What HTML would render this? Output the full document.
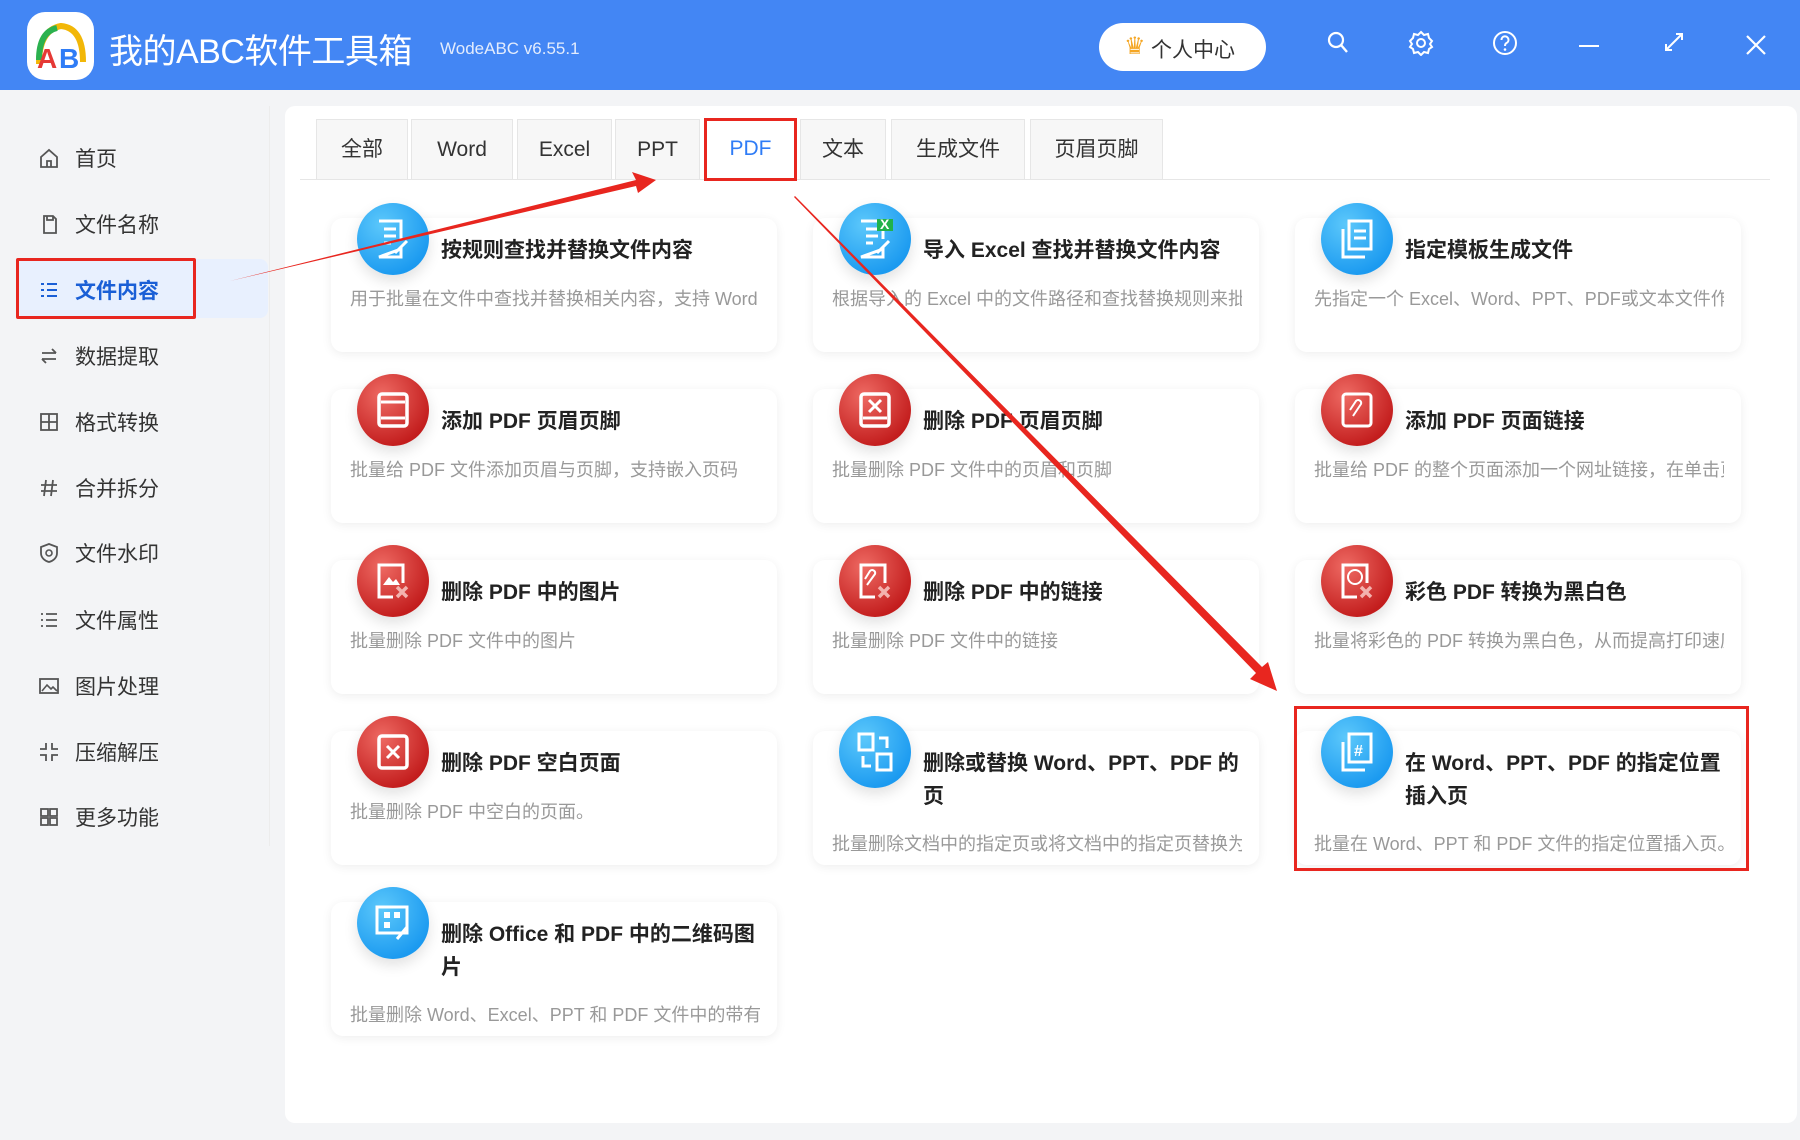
<!DOCTYPE html>
<html><head><meta charset="utf-8"><style>
*{margin:0;padding:0;box-sizing:border-box}
body{width:1800px;height:1140px;overflow:hidden;background:#f3f4f6;font-family:"Liberation Sans","Noto Sans CJK SC",sans-serif;position:relative}
.hdr{position:absolute;left:0;top:0;width:1800px;height:90px;background:#4386f4}
.logo{position:absolute;left:27px;top:12px;width:67px;height:68px;background:#fff;border-radius:18px}
.title{position:absolute;left:109px;top:24px;color:#fff;font-size:34px;letter-spacing:-0.5px}
.ver{position:absolute;left:440px;top:39px;color:#e3ecfd;font-size:17px}
.vip{position:absolute;left:1099px;top:23px;width:167px;height:48px;background:#fff;border-radius:24px;font-size:21px;color:#333;padding:11px 0 0 52px}
.hi{position:absolute;top:30px}
.side{position:absolute;left:0;top:90px;width:270px;height:1050px}
.si{position:absolute;left:0;width:270px;height:40px;font-size:21px;color:#333}
.si span{position:absolute;left:75px;top:6px}
.si svg{position:absolute;left:38px;top:10px}
.panel{position:absolute;left:285px;top:106px;width:1512px;height:1017px;background:#fff;border-radius:10px}
.tab{position:absolute;top:119px;height:60px;background:#f7f7f7;border:1px solid #e6e6e6;border-bottom:none;font-size:21px;color:#333;text-align:center;line-height:60px}
.card{position:absolute;width:446px;height:134px;background:#fff;border-radius:12px;box-shadow:0 2px 10px rgba(0,0,0,.07)}
.ic{position:absolute;left:26px;top:-15px;width:72px;height:72px;border-radius:50%;box-shadow:0 6px 14px rgba(0,0,0,.12)}
.b{background:radial-gradient(circle at 35% 30%,#5cc8fb,#1b9af0 75%)}
.r{background:radial-gradient(circle at 35% 30%,#ee6a63,#c31d1d 75%)}
.ic svg{position:absolute;left:18px;top:16px}
.ct{position:absolute;left:110px;top:16px;font-size:21px;font-weight:bold;color:#222;line-height:33px;width:320px}
.cd{position:absolute;left:19px;top:67px;width:410px;font-size:18px;color:#999;white-space:nowrap;overflow:hidden}
</style></head><body>
<div class="hdr">
<div class="logo"><svg width="67" height="68" viewBox="0 0 67 68"><path d="M12 52 Q12 18 34 14 Q56 16 56 50" fill="none" stroke="#f2b707" stroke-width="6"/><path d="M12 48 Q12 20 30 16" fill="none" stroke="#2bb14f" stroke-width="6"/><text x="10" y="56" font-size="28" font-weight="bold" fill="#e53935" font-family="Liberation Sans">A</text><text x="32" y="56" font-size="28" font-weight="bold" fill="#2f7cf6" font-family="Liberation Sans">B</text></svg></div>
<div class="title">我的ABC软件工具箱</div>
<div class="ver">WodeABC v6.55.1</div>
<div class="vip"><span style="position:absolute;left:25px;top:9px;font-size:24px;color:#f5a623">♛</span>个人中心</div>
<svg class="hi" style="left:1326px" width="24" height="26" viewBox="0 0 24 26"><circle cx="10" cy="10" r="7" fill="none" stroke="#fff" stroke-width="2.2"/><path d="M15 15l6 7" stroke="#fff" stroke-width="2.4"/></svg>
<svg class="hi" style="left:1408px" width="26" height="26" viewBox="0 0 26 26"><circle cx="13" cy="13" r="4" fill="none" stroke="#fff" stroke-width="2"/><path d="M13 2l3 3 4-1 1 4 3 3-2 3 2 3-3 2-1 4-4-1-3 3-3-3-4 1-1-4-3-2 2-3-2-3 3-3 1-4 4 1z" fill="none" stroke="#fff" stroke-width="2"/></svg>
<svg class="hi" style="left:1492px" width="26" height="26" viewBox="0 0 26 26"><circle cx="13" cy="13" r="11" fill="none" stroke="#fff" stroke-width="2"/><path d="M9.5 10a3.5 3.5 0 1 1 5 3c-1.2.6-1.5 1.300-1.5 3" fill="none" stroke="#fff" stroke-width="2"/><circle cx="13" cy="19.5" r="1.3" fill="#fff"/></svg>
<div class="hi" style="left:1579px;top:45px;width:20px;height:2px;background:#fff"></div>
<svg class="hi" style="left:1662px" width="24" height="24" viewBox="0 0 24 24"><path d="M4 20L20 4M14 4h6v6M4 14v6h6" fill="none" stroke="#fff" stroke-width="2"/></svg>
<svg class="hi" style="left:1745px;top:34px" width="22" height="22" viewBox="0 0 22 22"><path d="M2 2l18 18M20 2L2 20" stroke="#fff" stroke-width="2.2"/></svg>
</div>
<div style="position:absolute;left:269px;top:106px;width:1px;height:740px;background:#ececec"></div>
<div style="position:absolute;left:18px;top:259px;width:250px;height:59px;background:#e8f0fe;border-radius:8px"></div>
<div style="position:absolute;left:16px;top:258px;width:180px;height:61px;border:3px solid #e8261f;border-radius:2px"></div>
<div class="side">
<div class="si" style="top:47px"><svg width="22" height="22" viewBox="0 0 22 22"><path d="M3 10L11 3l8 7v10H3z M9 20v-6h4v6" fill="none" stroke="#555" stroke-width="1.8"/></svg><span>首页</span></div>
<div class="si" style="top:113px"><svg width="22" height="22" viewBox="0 0 22 22"><path d="M6 3h9l3 3v14H6z M9 3v4h6V3" fill="none" stroke="#555" stroke-width="1.8"/></svg><span>文件名称</span></div>
<div class="si" style="top:179px;color:#1a5fd6;font-weight:bold"><svg width="22" height="22" viewBox="0 0 22 22"><path d="M3 5h3M9 5h10M3 11h3M9 11h10M3 17h3M9 17h10" stroke="#1a5fd6" stroke-width="2"/></svg><span>文件内容</span></div>
<div class="si" style="top:245px"><svg width="22" height="22" viewBox="0 0 22 22"><path d="M4 8h14M14 4l4 4M4 14h14M4 14l4 4" fill="none" stroke="#555" stroke-width="1.8"/></svg><span>数据提取</span></div>
<div class="si" style="top:311px"><svg width="22" height="22" viewBox="0 0 22 22"><rect x="3" y="3" width="16" height="16" fill="none" stroke="#555" stroke-width="1.8"/><path d="M11 3v16M3 11h16" stroke="#555" stroke-width="1.8"/></svg><span>格式转换</span></div>
<div class="si" style="top:377px"><svg width="22" height="22" viewBox="0 0 22 22"><path d="M8 3L6 19M15 3l-2 16M3 8h16M3 14h16" stroke="#555" stroke-width="1.8"/></svg><span>合并拆分</span></div>
<div class="si" style="top:442px"><svg width="22" height="22" viewBox="0 0 22 22"><path d="M11 2l8 3v6c0 5-4 8-8 9-4-1-8-4-8-9V5z" fill="none" stroke="#555" stroke-width="1.8"/><circle cx="11" cy="11" r="3" fill="none" stroke="#555" stroke-width="1.6"/></svg><span>文件水印</span></div>
<div class="si" style="top:509px"><svg width="22" height="22" viewBox="0 0 22 22"><path d="M3 5h2M8 5h11M3 11h2M8 11h11M3 17h2M8 17h11" stroke="#555" stroke-width="1.8"/></svg><span>文件属性</span></div>
<div class="si" style="top:575px"><svg width="22" height="22" viewBox="0 0 22 22"><rect x="2" y="4" width="18" height="14" fill="none" stroke="#555" stroke-width="1.8"/><path d="M4 16l5-6 4 4 2-2 4 4" fill="none" stroke="#555" stroke-width="1.6"/></svg><span>图片处理</span></div>
<div class="si" style="top:641px"><svg width="22" height="22" viewBox="0 0 22 22"><path d="M8 2v6H2M14 2v6h6M8 20v-6H2M14 20v-6h6" fill="none" stroke="#555" stroke-width="1.8"/></svg><span>压缩解压</span></div>
<div class="si" style="top:706px"><svg width="22" height="22" viewBox="0 0 22 22"><rect x="3" y="3" width="7" height="7" fill="none" stroke="#555" stroke-width="1.8"/><rect x="12" y="3" width="7" height="7" fill="none" stroke="#555" stroke-width="1.8"/><rect x="3" y="12" width="7" height="7" fill="none" stroke="#555" stroke-width="1.8"/><rect x="12" y="12" width="7" height="7" fill="none" stroke="#555" stroke-width="1.8"/></svg><span>更多功能</span></div>
</div>
<div class="panel"></div>
<div style="position:absolute;left:300px;top:179px;width:1470px;height:1px;background:#e6e6e6"></div>
<div class="tab" style="left:316px;width:92px">全部</div>
<div class="tab" style="left:411px;width:102px">Word</div>
<div class="tab" style="left:517px;width:95px">Excel</div>
<div class="tab" style="left:615px;width:85px">PPT</div>
<div class="tab" style="left:704px;width:93px;background:#fff;color:#2f7cf6;border:3px solid #e8261f;line-height:56px;top:118px;height:63px">PDF</div>
<div class="tab" style="left:800px;width:86px">文本</div>
<div class="tab" style="left:891px;width:134px">生成文件</div>
<div class="tab" style="left:1030px;width:133px">页眉页脚</div>

<div class="card" style="left:331px;top:218px"><div class="ic b"><svg width="36" height="40" viewBox="0 0 36 40"><path d="M4 2h22v18M26 30v8H4z" fill="none" stroke="#fff" stroke-width="3"/><path d="M9 10h12M9 17h12M9 24h7M20 34l12-12" stroke="#fff" stroke-width="3"/></svg></div><div class="ct">按规则查找并替换文件内容</div><div class="cd">用于批量在文件中查找并替换相关内容，支持 Word</div></div>
<div class="card" style="left:813px;top:218px"><div class="ic b"><svg width="36" height="40" viewBox="0 0 36 40"><path d="M4 2h22v18M26 30v8H4z" fill="none" stroke="#fff" stroke-width="3"/><path d="M9 10h12M9 17h12M9 24h7M20 34l12-12" stroke="#fff" stroke-width="3"/><rect x="20" y="-4" width="16" height="16" fill="#21b24b"/><text x="23" y="10" font-size="14" fill="#fff" font-weight="bold">X</text></svg></div><div class="ct">导入 Excel 查找并替换文件内容</div><div class="cd">根据导入的 Excel 中的文件路径和查找替换规则来批</div></div>
<div class="card" style="left:1295px;top:218px"><div class="ic b"><svg width="36" height="40" viewBox="0 0 36 40"><rect x="10" y="2" width="22" height="28" fill="none" stroke="#fff" stroke-width="3"/><path d="M4 10v28h22M15 12h12M15 19h12" fill="none" stroke="#fff" stroke-width="3"/></svg></div><div class="ct">指定模板生成文件</div><div class="cd">先指定一个 Excel、Word、PPT、PDF或文本文件作为</div></div>

<div class="card" style="left:331px;top:389px"><div class="ic r"><svg width="36" height="40" viewBox="0 0 36 40"><rect x="4" y="4" width="28" height="32" rx="3" fill="none" stroke="#fff" stroke-width="3.5"/><path d="M6 12h24M6 28h24" stroke="#fff" stroke-width="3"/></svg></div><div class="ct">添加 PDF 页眉页脚</div><div class="cd">批量给 PDF 文件添加页眉与页脚，支持嵌入页码</div></div>
<div class="card" style="left:813px;top:389px"><div class="ic r"><svg width="36" height="40" viewBox="0 0 36 40"><rect x="4" y="4" width="28" height="32" rx="3" fill="none" stroke="#fff" stroke-width="3.5"/><path d="M6 28h24M12 10l12 12M24 10L12 22" stroke="#fff" stroke-width="3"/></svg></div><div class="ct">删除 PDF 页眉页脚</div><div class="cd">批量删除 PDF 文件中的页眉和页脚</div></div>
<div class="card" style="left:1295px;top:389px"><div class="ic r"><svg width="36" height="40" viewBox="0 0 36 40"><rect x="4" y="4" width="28" height="32" rx="3" fill="none" stroke="#fff" stroke-width="3"/><path d="M14 26l8-12a3 3 0 0 0-5-3l-6 9" fill="none" stroke="#fff" stroke-width="2"/></svg></div><div class="ct">添加 PDF 页面链接</div><div class="cd">批量给 PDF 的整个页面添加一个网址链接，在单击页</div></div>

<div class="card" style="left:331px;top:560px"><div class="ic r"><svg width="36" height="40" viewBox="0 0 36 40"><path d="M28 22V4H4v32h14" fill="none" stroke="#fff" stroke-width="3"/><path d="M8 24l6-8 4 5 3-3 4 6z" fill="#fff"/><path d="M22 26l10 10M32 26L22 36" stroke="#f3b2ae" stroke-width="3.5"/></svg></div><div class="ct">删除 PDF 中的图片</div><div class="cd">批量删除 PDF 文件中的图片</div></div>
<div class="card" style="left:813px;top:560px"><div class="ic r"><svg width="36" height="40" viewBox="0 0 36 40"><path d="M28 22V4H4v32h14" fill="none" stroke="#fff" stroke-width="3"/><path d="M10 24l8-11a3 3 0 0 0-5-3l-5 8" fill="none" stroke="#fff" stroke-width="2"/><path d="M22 26l10 10M32 26L22 36" stroke="#f3b2ae" stroke-width="3.5"/></svg></div><div class="ct">删除 PDF 中的链接</div><div class="cd">批量删除 PDF 文件中的链接</div></div>
<div class="card" style="left:1295px;top:560px"><div class="ic r"><svg width="36" height="40" viewBox="0 0 36 40"><path d="M28 22V4H4v32h14" fill="none" stroke="#fff" stroke-width="3"/><circle cx="16" cy="16" r="7" fill="none" stroke="#fff" stroke-width="2"/><path d="M22 26l10 10M32 26L22 36" stroke="#f3b2ae" stroke-width="3.5"/></svg></div><div class="ct">彩色 PDF 转换为黑白色</div><div class="cd">批量将彩色的 PDF 转换为黑白色，从而提高打印速度</div></div>

<div class="card" style="left:331px;top:731px"><div class="ic r"><svg width="36" height="40" viewBox="0 0 36 40"><rect x="4" y="4" width="28" height="32" rx="3" fill="none" stroke="#fff" stroke-width="3.5"/><path d="M12 14l12 12M24 14L12 26" stroke="#fff" stroke-width="3"/></svg></div><div class="ct">删除 PDF 空白页面</div><div class="cd">批量删除 PDF 中空白的页面。</div></div>
<div class="card" style="left:813px;top:731px"><div class="ic b"><svg width="36" height="40" viewBox="0 0 36 40"><rect x="2" y="2" width="14" height="16" fill="none" stroke="#fff" stroke-width="3"/><rect x="20" y="22" width="14" height="16" fill="none" stroke="#fff" stroke-width="3"/><path d="M22 6h8v10M6 24v10h8" fill="none" stroke="#fff" stroke-width="3"/></svg></div><div class="ct">删除或替换 Word、PPT、PDF 的页</div><div class="cd" style="top:99px">批量删除文档中的指定页或将文档中的指定页替换为</div></div>
<div class="card" style="left:1295px;top:731px"><div class="ic b"><svg width="36" height="40" viewBox="0 0 36 40"><rect x="10" y="2" width="22" height="28" fill="none" stroke="#fff" stroke-width="3"/><path d="M4 10v28h22" fill="none" stroke="#fff" stroke-width="3"/><text x="15" y="24" font-size="16" fill="#fff" font-weight="bold">#</text></svg></div><div class="ct">在 Word、PPT、PDF 的指定位置插入页</div><div class="cd" style="top:99px">批量在 Word、PPT 和 PDF 文件的指定位置插入页。</div></div>

<div class="card" style="left:331px;top:902px"><div class="ic b"><svg width="36" height="40" viewBox="0 0 36 40"><rect x="2" y="4" width="30" height="26" fill="none" stroke="#fff" stroke-width="3"/><rect x="9" y="9" width="6" height="6" fill="#fff"/><rect x="19" y="9" width="6" height="6" fill="#fff"/><rect x="9" y="19" width="6" height="6" fill="#fff"/><path d="M22 36l10-12" stroke="#fff" stroke-width="3"/></svg></div><div class="ct">删除 Office 和 PDF 中的二维码图片</div><div class="cd" style="top:99px">批量删除 Word、Excel、PPT 和 PDF 文件中的带有二</div></div>

<div style="position:absolute;left:1294px;top:706px;width:455px;height:165px;border:3px solid #e8261f"></div>
<svg style="position:absolute;left:0;top:0" width="1800" height="1140">
<polygon points="230,281 636,180 632,172 656,180 638,193 636,186" fill="#e8261f"/>
<polygon points="794,197 795,196 1262,667 1268,662 1277,691 1250,679 1256,673" fill="#e8261f"/>
</svg>
</body></html>
